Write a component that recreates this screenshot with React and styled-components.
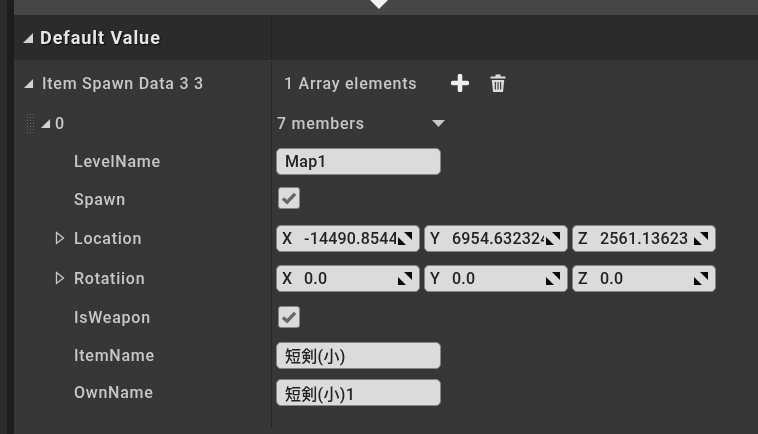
import React from "react";
import styled, { createGlobalStyle } from "styled-components";

const Global = createGlobalStyle`
  html, body { margin: 0; padding: 0; background: #383838; }
  body { font-family: Roboto, "Noto Sans CJK JP", sans-serif; }
`;

const Frame = styled.div`
  width: 758px;
  height: 434px;
  overflow: hidden;
  display: flex;
  background: #2e2e2e;
  filter: blur(0.4px);
`;
const Gutter = styled.div`
  width: 7px;
  background: #2c2c2c;
`;
const Rail = styled.div`
  width: 7px;
  background: #1d1d1d;
`;
const Panel = styled.div`
  flex: 1;
  display: flex;
  flex-direction: column;
  background-color: #3a3a3a;
  background-image: radial-gradient(#303030 0.6px, transparent 0.75px);
  background-size: 2px 2px;
`;
const TopBar = styled.div`
  height: 15px;
  display: flex;
  justify-content: center;
  background: #464646;
  padding-right: 14px;
  box-sizing: border-box;
`;
const HeaderRow = styled.div`
  height: 45px;
  display: flex;
  background-color: #2d2d2d;
  background-image: radial-gradient(#272727 0.6px, transparent 0.75px);
  background-size: 2px 2px;
  color: #e6e6e6;
`;
const NameCell = styled.div`
  width: 258px;
  flex: none;
  display: flex;
  align-items: center;
  box-sizing: border-box;
  padding-left: ${(p) => p.$indent}px;
  border-right: 1px solid #242424;
`;
const ValueCell = styled.div`
  flex: 1;
  min-width: 0;
  display: flex;
  align-items: center;
  padding-left: ${(p) => p.$pad ?? 4}px;
`;
const Row = styled.div`
  height: ${(p) => p.$h}px;
  box-sizing: border-box;
  padding-top: ${(p) => p.$pt || 0}px;
  display: flex;
`;
const Fill = styled.div`
  flex: 1;
  display: flex;
`;
const FillName = styled(NameCell)`
  margin-bottom: 6px;
`;
const Title = styled.span`
  font-size: 18px;
  font-weight: 700;
  letter-spacing: 0.95px;
  margin-left: 6px;
  text-shadow: 1px 1px 1px #0c0c0c;
`;
const Label = styled.span`
  font-size: 16px;
  font-weight: 500;
  letter-spacing: 0.75px;
  color: #c8c8c8;
  margin-left: ${(p) => p.$ml || 0}px;
`;
const ValueText = styled(Label)``;
const TextBox = styled.div`
  width: 165px;
  height: 27px;
  box-sizing: border-box;
  padding-left: 8px;
  display: flex;
  align-items: center;
  background: #dbdbdb;
  border: 1px solid #868686;
  border-radius: 5px;
  color: #222;
  font-size: 16px;
  font-weight: 500;
  letter-spacing: 0.3px;
`;
const Check = styled.div`
  width: 22px;
  height: 22px;
  margin-left: 2px;
  margin-bottom: ${(p) => p.$mb || 0}px;
  box-sizing: border-box;
  display: flex;
  align-items: center;
  justify-content: center;
  background: #dbdbdb;
  border: 1px solid #868686;
  border-radius: 3px;
`;
const VectorRow = styled.div`
  display: flex;
  gap: 4px;
`;
const NumBox = styled.div`
  width: 144px;
  height: 27px;
  box-sizing: border-box;
  display: flex;
  align-items: center;
  padding: 0 7px 0 5px;
  background: #dbdbdb;
  border: 1px solid #868686;
  border-radius: 5px;
  color: #222;
  font-size: 16px;
  font-weight: 500;
  letter-spacing: 0.2px;
`;
const Axis = styled.span`
  width: 22px;
  flex: none;
`;
const Num = styled.span`
  flex: 1;
  min-width: 0;
  margin-right: 2px;
  overflow: hidden;
  white-space: nowrap;
`;
const Grip = styled.div`
  width: 9px;
  height: 21px;
  margin-right: 5px;
  background-image: radial-gradient(#666 0.9px, transparent 1px);
  background-size: 3px 3px;
`;
const IconBtn = styled.span`
  display: inline-flex;
  margin-left: ${(p) => p.$ml || 0}px;
`;

const Open = ({ s = 12, c = "#d2d2d2" }) => (
  <svg width={s} height={s} viewBox="0 0 12 12"><path d="M1 11 L11 1 V11 Z" fill={c} /></svg>
);
const Closed = () => (
  <svg width="10" height="14" viewBox="0 0 10 14"><path d="M1.5 1.5 L8.5 7 L1.5 12.5 Z" fill="none" stroke="#c8c8c8" strokeWidth="1.3" /></svg>
);
const Spin = () => (
  <svg width="14" height="13" viewBox="0 0 14 13">
    <path d="M6 0 H14 V8 Z" fill="#0c0c0c" />
    <path d="M0 5 L8 13 H0 Z" fill="#0c0c0c" />
  </svg>
);
const Tick = () => (
  <svg width="16" height="14" viewBox="0 0 17 15"><path d="M2 8 L6.5 12 L15 3" fill="none" stroke="#666" strokeWidth="3.6" /></svg>
);
const Plus = () => (
  <svg width="18" height="18" viewBox="0 0 18 18"><path d="M9 2 V16 M2 9 H16" stroke="#eee" strokeWidth="4.6" strokeLinecap="round" /></svg>
);
const Trash = () => (
  <svg width="18" height="20" viewBox="0 0 18 20" fill="none">
    <path d="M6.5 1.5 H11.5 V3.5 H16.5 V5.5 H1.5 V3.5 H6.5 Z" fill="#dcdcdc" />
    <path d="M2.8 7 H15.2 L14 19 H4 Z" fill="#dcdcdc" />
    <path d="M6.4 9 V16.5 M9 9 V16.5 M11.6 9 V16.5" stroke="#404040" strokeWidth="1.2" />
  </svg>
);
const Caret = () => (
  <svg width="13" height="7" viewBox="0 0 13 7"><path d="M0 0 H13 L6.5 7 Z" fill="#c8c8c8" /></svg>
);
const TopCaret = () => (
  <svg width="18" height="9" viewBox="0 0 18 9"><path d="M0 0 H18 L9 9 Z" fill="#f2f2f2" /></svg>
);

const Vector = ({ items }) => (
  <VectorRow>
    {items.map(([axis, val]) => (
      <NumBox key={axis}>
        <Axis>{axis}</Axis>
        <Num>{val}</Num>
        <Spin />
      </NumBox>
    ))}
  </VectorRow>
);

const rows = [
  { h: 38, name: "LevelName", value: <TextBox>Map1</TextBox> },
  { h: 38, name: "Spawn", value: <Check $mb={2}><Tick /></Check> },
  { h: 40, name: "Location", closed: true, value: (
    <Vector items={[["X", "-14490.8544"], ["Y", "6954.632324"], ["Z", "2561.13623"]]} />
  ) },
  { h: 40, name: "Rotatiion", closed: true, value: (
    <Vector items={[["X", "0.0"], ["Y", "0.0"], ["Z", "0.0"]]} />
  ) },
  { h: 38, name: "IsWeapon", value: <Check><Tick /></Check> },
  { h: 38, name: "ItemName", value: <TextBox>短剣(小)</TextBox> },
  { h: 37, name: "OwnName", value: <TextBox>短剣(小)1</TextBox> },
];

export default function App() {
  return (
    <Frame>
      <Global />
      <Gutter />
      <Rail />
      <Panel>
        <TopBar><TopCaret /></TopBar>
        <HeaderRow>
          <NameCell $indent={8}>
            <Open s={12} />
            <Title>Default Value</Title>
          </NameCell>
          <ValueCell />
        </HeaderRow>
        <Row $h={44} $pt={2}>
          <NameCell $indent={9}>
            <Open s={11} />
            <Label $ml={8}>Item Spawn Data 3 3</Label>
          </NameCell>
          <ValueCell $pad={12}>
            <ValueText>1 Array elements</ValueText>
            <IconBtn $ml={34}><Plus /></IconBtn>
            <IconBtn $ml={20}><Trash /></IconBtn>
          </ValueCell>
        </Row>
        <Row $h={38}>
          <NameCell $indent={12}>
            <Grip />
            <Open s={11} />
            <Label $ml={4}>0</Label>
          </NameCell>
          <ValueCell $pad={5}>
            <ValueText>7 members</ValueText>
            <IconBtn $ml={67}><Caret /></IconBtn>
          </ValueCell>
        </Row>
        {rows.map((r) => (
          <Row key={r.name} $h={r.h}>
            <NameCell $indent={r.closed ? 41 : 60}>
              {r.closed && <Closed />}
              <Label $ml={r.closed ? 9 : 0}>{r.name}</Label>
            </NameCell>
            <ValueCell>{r.value}</ValueCell>
          </Row>
        ))}
        <Fill>
          <FillName $indent={0} />
        </Fill>
      </Panel>
    </Frame>
  );
}
